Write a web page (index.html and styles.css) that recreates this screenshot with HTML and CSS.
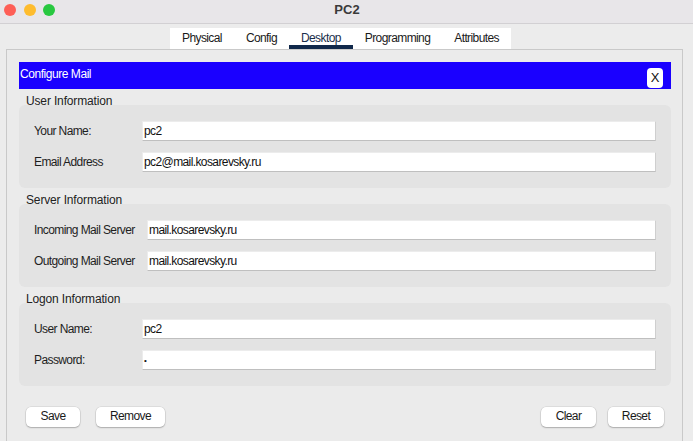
FILE: index.html
```html
<!DOCTYPE html>
<html lang="en">
<head>
<meta charset="utf-8">
<title>PC2</title>
<link rel="stylesheet" href="styles.css">
</head>
<body>
<div class="window">
  <header class="titlebar">
    <div class="lights">
      <span class="light red"></span>
      <span class="light yellow"></span>
      <span class="light green"></span>
    </div>
    <div class="title">PC2</div>
  </header>
  <nav class="tabs-row">
    <div class="tabs">
      <span class="tab">Physical</span>
      <span class="tab">Config</span>
      <span class="tab active">Desktop</span>
      <span class="tab">Programming</span>
      <span class="tab">Attributes</span>
    </div>
  </nav>
  <main class="panel">
    <div class="dialog-head">
      <span class="dialog-title">Configure Mail</span>
      <span class="close-btn">X</span>
    </div>

    <div class="section-title">User Information</div>
    <section class="group">
      <div class="row">
        <span class="label">Your Name:</span>
        <div class="field">pc2</div>
      </div>
      <div class="row">
        <span class="label">Email Address</span>
        <div class="field">pc2@mail.kosarevsky.ru</div>
      </div>
    </section>

    <div class="section-title">Server Information</div>
    <section class="group group-wide">
      <div class="row">
        <span class="label">Incoming Mail Server</span>
        <div class="field">mail.kosarevsky.ru</div>
      </div>
      <div class="row">
        <span class="label">Outgoing Mail Server</span>
        <div class="field">mail.kosarevsky.ru</div>
      </div>
    </section>

    <div class="section-title">Logon Information</div>
    <section class="group">
      <div class="row">
        <span class="label">User Name:</span>
        <div class="field">pc2</div>
      </div>
      <div class="row">
        <span class="label">Password:</span>
        <div class="field"><span class="dot">•</span></div>
      </div>
    </section>

    <div class="actions">
      <div class="btn-group">
        <span class="btn btn-save">Save</span>
        <span class="btn btn-remove">Remove</span>
      </div>
      <div class="btn-group btn-group-right">
        <span class="btn btn-clear">Clear</span>
        <span class="btn btn-reset">Reset</span>
      </div>
    </div>
  </main>
</div>
</body>
</html>
```

FILE: styles.css
```css
* { box-sizing: border-box; }

html, body {
  margin: 0;
  padding: 0;
}

body {
  width: 693px;
  height: 441px;
  overflow: hidden;
  background: #ececec;
  font-family: "Liberation Sans", Arial, Helvetica, sans-serif;
  font-size: 12px;
  letter-spacing: -0.6px;
  color: #1e1e1e;
}

.window {
  height: 441px;
  display: flex;
  flex-direction: column;
}

/* title bar */
.titlebar {
  height: 24px;
  flex: none;
  background: #e8e6e9;
  border-bottom: 1px solid #d2d0d3;
  display: flex;
  align-items: center;
  position: relative;
}

.lights {
  display: flex;
  gap: 7px;
  padding-left: 4px;
  margin-top: -4px;
}

.light {
  width: 12px;
  height: 12px;
  border-radius: 50%;
  display: block;
}
.red { background: #fe5f57; }
.yellow { background: #febc2e; margin-left: 1px; }
.green { background: #28c840; }

.title {
  position: absolute;
  left: 0;
  right: 0;
  top: 2px;
  text-align: center;
  font-weight: bold;
  font-size: 13px;
  letter-spacing: 0;
  color: #3a3a3a;
  padding-left: 1px;
}

/* tabs */
.tabs-row {
  flex: none;
  padding-top: 4px;
  padding-left: 170px;
  display: flex;
}

.tabs {
  display: flex;
  background: #ffffff;
  height: 21px;
}

.tab {
  padding: 1px 12px 0;
  line-height: 19px;
  height: 21px;
  color: #1a1a1a;
  border-bottom: 4px solid transparent;
}

.tab.active {
  color: #1b2f4c;
  border-bottom-color: #10284a;
}

/* panel */
.panel {
  flex: 1;
  margin: 0 10px 0 6px;
  border: 1px solid #c9c9c9;
  border-bottom: none;
  background: #ebebeb;
  padding: 12px 11px 0 12px;
}

.dialog-head {
  height: 27px;
  background: #1a00ff;
  display: flex;
  justify-content: space-between;
  padding: 0 8px 1px 1px;
}

.dialog-title {
  color: #ffffff;
  line-height: 24px;
  letter-spacing: -0.45px;
}

.close-btn {
  align-self: flex-end;
  width: 16px;
  height: 20px;
  background: #ffffff;
  border-radius: 4px;
  color: #111;
  font-size: 13px;
  letter-spacing: 0;
  text-align: center;
  line-height: 20px;
}

.section-title {
  height: 16px;
  line-height: 25px;
  padding-left: 7px;
  color: #222;
  font-size: 12px;
  letter-spacing: -0.15px;
}

.group {
  background: #e3e3e3;
  border-radius: 6px;
  padding: 16px 15px 16px 15px;
  display: grid;
  grid-template-columns: 108px 1fr;
  row-gap: 11px;
}

.group-wide {
  grid-template-columns: 113px 1fr;
}

.row {
  display: contents;
}

.label {
  line-height: 20px;
  height: 20px;
  white-space: nowrap;
  color: #1e1e1e;
}

.field {
  height: 20px;
  background: #ffffff;
  border: 1px solid #ececec;
  border-bottom-color: #bfbfbf;
  border-right-color: #cfcfcf;
  padding-left: 1px;
  line-height: 18px;
  color: #111;
}

.dot {
  font-size: 8px;
  vertical-align: 1px;
}

/* actions */
.actions {
  margin-top: 21px;
  padding: 0 7px;
  display: flex;
  justify-content: space-between;
}

.btn-group {
  display: flex;
  gap: 16px;
}

.btn-group-right {
  gap: 12px;
}

.btn {
  height: 20px;
  line-height: 18px;
  background: #ffffff;
  border-radius: 5px;
  text-align: center;
  color: #1a1a1a;
  box-shadow: 0 0 0 0.5px rgba(0, 0, 0, 0.12), 0 1px 1.5px rgba(0, 0, 0, 0.22);
}

.btn-save { width: 54px; }
.btn-remove { width: 69px; }
.btn-clear { width: 55px; }
.btn-reset { width: 56px; }
```
